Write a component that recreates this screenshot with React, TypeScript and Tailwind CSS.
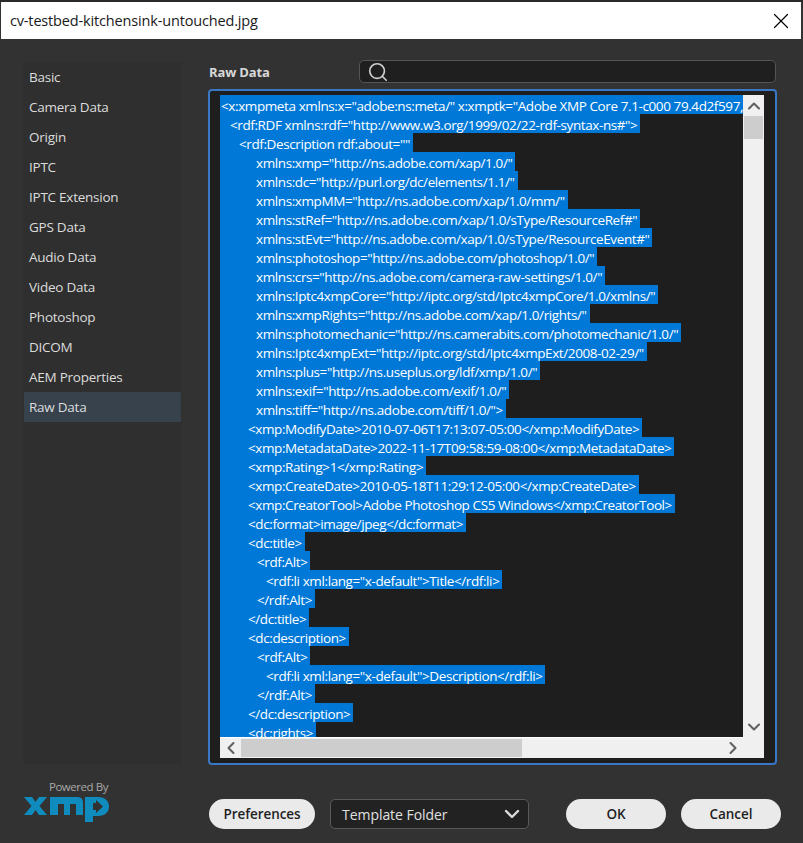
import { ChevronDown, ChevronLeft, ChevronRight, ChevronUp, Search, X } from 'lucide-react';

const sections = [
  'Basic',
  'Camera Data',
  'Origin',
  'IPTC',
  'IPTC Extension',
  'GPS Data',
  'Audio Data',
  'Video Data',
  'Photoshop',
  'DICOM',
  'AEM Properties',
  'Raw Data',
];

const indents: Record<number, string> = {
  0: 'pl-[1px]',
  1: 'pl-[10px]',
  2: 'pl-[19px]',
  3: 'pl-[28px]',
  4: 'pl-[36px]',
  5: 'pl-[37px]',
  6: 'pl-[46px]',
};

const lines: [number, string][] = [
  [0, '<x:xmpmeta xmlns:x="adobe:ns:meta/" x:xmptk="Adobe XMP Core 7.1-c000 79.4d2f597,'],
  [1, '<rdf:RDF xmlns:rdf="http://www.w3.org/1999/02/22-rdf-syntax-ns#">'],
  [2, '<rdf:Description rdf:about=""'],
  [4, 'xmlns:xmp="http://ns.adobe.com/xap/1.0/"'],
  [4, 'xmlns:dc="http://purl.org/dc/elements/1.1/"'],
  [4, 'xmlns:xmpMM="http://ns.adobe.com/xap/1.0/mm/"'],
  [4, 'xmlns:stRef="http://ns.adobe.com/xap/1.0/sType/ResourceRef#"'],
  [4, 'xmlns:stEvt="http://ns.adobe.com/xap/1.0/sType/ResourceEvent#"'],
  [4, 'xmlns:photoshop="http://ns.adobe.com/photoshop/1.0/"'],
  [4, 'xmlns:crs="http://ns.adobe.com/camera-raw-settings/1.0/"'],
  [4, 'xmlns:Iptc4xmpCore="http://iptc.org/std/Iptc4xmpCore/1.0/xmlns/"'],
  [4, 'xmlns:xmpRights="http://ns.adobe.com/xap/1.0/rights/"'],
  [4, 'xmlns:photomechanic="http://ns.camerabits.com/photomechanic/1.0/"'],
  [4, 'xmlns:Iptc4xmpExt="http://iptc.org/std/Iptc4xmpExt/2008-02-29/"'],
  [4, 'xmlns:plus="http://ns.useplus.org/ldf/xmp/1.0/"'],
  [4, 'xmlns:exif="http://ns.adobe.com/exif/1.0/"'],
  [4, 'xmlns:tiff="http://ns.adobe.com/tiff/1.0/">'],
  [3, '<xmp:ModifyDate>2010-07-06T17:13:07-05:00</xmp:ModifyDate>'],
  [3, '<xmp:MetadataDate>2022-11-17T09:58:59-08:00</xmp:MetadataDate>'],
  [3, '<xmp:Rating>1</xmp:Rating>'],
  [3, '<xmp:CreateDate>2010-05-18T11:29:12-05:00</xmp:CreateDate>'],
  [3, '<xmp:CreatorTool>Adobe Photoshop CS5 Windows</xmp:CreatorTool>'],
  [3, '<dc:format>image/jpeg</dc:format>'],
  [3, '<dc:title>'],
  [5, '<rdf:Alt>'],
  [6, '<rdf:li xml:lang="x-default">Title</rdf:li>'],
  [5, '</rdf:Alt>'],
  [3, '</dc:title>'],
  [3, '<dc:description>'],
  [5, '<rdf:Alt>'],
  [6, '<rdf:li xml:lang="x-default">Description</rdf:li>'],
  [5, '</rdf:Alt>'],
  [3, '</dc:description>'],
  [3, '<dc:rights>'],
];

function XmpLogo() {
  return (
    <svg width="86" height="27" viewBox="0 0 86 27" fill="#0f8cbd">
      <path d="M1 1h8l3.500 5L16 1h8l-7.500 9 7.500 9h-8l-3.500-5L9 19H1l7.500-9z" />
      <path d="M27 1h27c4 0 6 2 6 6v12h-7V8h-6v11h-6V8h-6v11h-8z" />
      <path
        fillRule="evenodd"
        d="M62 1h13c7 0 11 4 11 9.500S82 20 75 20h-5v6h-8zM70 7v7h3v3l7-6.500L73 4v3z"
      />
    </svg>
  );
}

export default function App() {
  return (
    <div className="flex h-[843px] w-[803px] flex-col overflow-hidden bg-[#323232] font-['Open_Sans',sans-serif] text-[13.5px]">
      <div className="h-[2px] bg-[#2a2a2a]" />

      {/* Title bar */}
      <div className="mr-[2px] ml-[1px] flex h-[37px] items-center justify-between bg-white pr-[7px] pl-[9px] text-[#1a1a1a]">
        <span className="text-[14.5px] tracking-[-0.16px]">cv-testbed-kitchensink-untouched.jpg</span>
        <X size={26} strokeWidth={1.1} className="text-black" />
      </div>

      <div className="flex h-[742px] pt-[21px] pl-[23px]">
        {/* Section list */}
        <div className="mt-[2px] h-[702px] w-[159px] bg-[#2f2f2f]">
          {sections.map((name) => (
            <div
              key={name}
              className={`flex h-[30px] items-center tracking-[-0.25px] text-[#dcdcdc] ${name === 'Raw Data' ? 'ml-[1px] w-[157px] bg-[#37424d] pl-[5px]' : 'pl-[6px]'}`}
            >
              {name}
            </div>
          ))}
        </div>

        <div className="ml-[26px] w-[569px]">
          {/* Header */}
          <div className="flex h-[29px] items-start">
            <div className="w-[151px] pt-[3px] pl-[1px] text-[13px] font-bold tracking-[-0.15px] text-[#d8d8d8]">Raw Data</div>
            <div className="flex h-[23px] w-[417px] items-center rounded-[5px] border border-[#555555] bg-[#1f1f1f] pl-[7px]">
              <Search size={22} strokeWidth={1.8} className="text-[#d0d0d0]" />
            </div>
          </div>

          {/* Editor */}
          <div className="h-[676px] rounded-[4px] border-2 border-[#3a78c6] bg-[#1e1e1e] pt-[4px] pr-[11px] pb-[5px] pl-[10px]">
            <div className="flex h-[663px]">
              <div className="flex w-[523px] flex-col">
                <div className="h-[642px] overflow-hidden text-[13.5px] leading-[23px] tracking-[-0.4px] whitespace-pre text-white">
                  {lines.map(([indent, text], i) => (
                    <div key={i} className={`h-[19px] w-fit bg-[#0078d7] pr-[3px] ${indents[indent]}`}>
                      {text}
                    </div>
                  ))}
                </div>
                <div className="flex h-[21px] items-stretch border-t border-white bg-[#f0f0f0]">
                  <div className="flex w-[21px] items-center justify-center">
                    <ChevronLeft size={20} strokeWidth={2.5} className="text-[#606060]" />
                  </div>
                  <div className="my-[1px] w-[281px] bg-[#cdcdcd]" />
                  <div className="flex-1" />
                  <div className="flex w-[21px] items-center justify-center">
                    <ChevronRight size={20} strokeWidth={2.5} className="text-[#606060]" />
                  </div>
                </div>
              </div>
              <div className="flex w-[21px] flex-col items-center bg-[#f0f0f0]">
                <div className="flex h-[21px] items-center">
                  <ChevronUp size={20} strokeWidth={2.5} className="text-[#606060]" />
                </div>
                <div className="h-[23px] w-[19px] bg-[#cdcdcd]" />
                <div className="flex-1" />
                <div className="mb-[21px] flex h-[21px] items-center">
                  <ChevronDown size={20} strokeWidth={2.5} className="text-[#606060]" />
                </div>
              </div>
            </div>
          </div>
        </div>
      </div>

      {/* Footer */}
      <div className="flex pl-[23px]">
        <div className="flex w-[86px] flex-col items-end">
          <span className="mr-[1px] mb-[3px] text-[11.5px] leading-[12px] tracking-[-0.45px] text-[#a8a8a8]">Powered By</span>
          <XmpLogo />
        </div>
        <div className="flex pt-[18px] pl-[100px]">
          <button className="h-[30px] w-[106px] rounded-full bg-[#eaeaea] pt-[1px] text-[13.5px] font-semibold tracking-[-0.06px] text-[#1f1f1f]">
            Preferences
          </button>
          <div className="ml-[15px] flex h-[30px] w-[199px] items-center justify-between rounded-[5px] border border-[#5a5a5a] bg-[#222222] pr-[4px] pl-[11px] text-[14px] tracking-[-0.05px] text-[#e0e0e0]">
            Template Folder
            <ChevronDown size={24} strokeWidth={2.4} className="text-[#dcdcdc]" />
          </div>
          <button className="ml-[37px] h-[30px] w-[100px] rounded-full bg-[#eaeaea] pt-[1px] text-[13.5px] font-semibold text-[#1f1f1f]">
            OK
          </button>
          <button className="ml-[15px] h-[30px] w-[100px] rounded-full bg-[#eaeaea] pt-[1px] text-[13.5px] font-semibold text-[#1f1f1f]">
            Cancel
          </button>
        </div>
      </div>
    </div>
  );
}
